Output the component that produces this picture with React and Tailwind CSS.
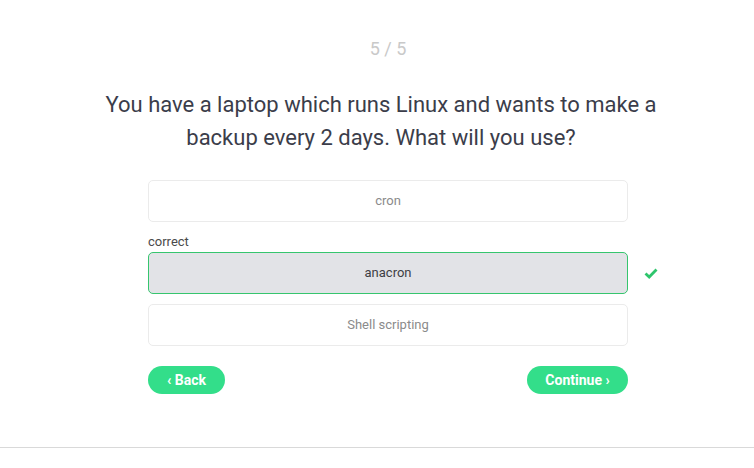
import React from "react";

const options = [
  { label: "cron", correct: false },
  { label: "anacron", correct: true },
  { label: "Shell scripting", correct: false },
];

function Check() {
  return (
    <svg width="14" height="11" viewBox="0 0 14 11" className="absolute left-[496px] top-[16px]">
      <path d="M1.5 5.5 L5.2 9 L12.5 1.5" fill="none" stroke="#2ec56c" strokeWidth="2.8" strokeLinejoin="miter" />
    </svg>
  );
}

export default function App() {
  return (
    <div className="min-h-[468px] bg-white font-['Roboto',sans-serif]">
      <div className="flex flex-col items-center pl-[22px] pt-[37px]">
        <div className="text-[18px] leading-[24px] text-[#c9c9c9]">5 / 5</div>
        <h1 className="mt-[27px] mr-[14px] w-[580px] text-center text-[22px] leading-[33px] text-[#3b3d4a] font-normal">
          You have a laptop which runs Linux and wants to make a backup every 2 days. What will you use?
        </h1>

        <div className="mt-[26px] w-[480px]">
          {options.map((opt, i) => (
            <div key={i} className={opt.correct ? "mt-[12px]" : i > 0 ? "mt-[10px]" : ""}>
              {opt.correct && (
                <div className="mb-[3px] text-[13px] leading-[15px] text-[#4a4a4a]">correct</div>
              )}
              <div className="relative">
                <div
                  className={
                    opt.correct
                      ? "flex h-[42px] items-center justify-center rounded-[5px] border border-[#36c56e] bg-[#e2e3e7] text-[13px] text-[#3e3e44]"
                      : "flex h-[42px] items-center justify-center rounded-[5px] border border-[#ebebeb] bg-white text-[13px] text-[#8b8b8b]"
                  }
                >
                  {opt.label}
                </div>
                {opt.correct && <Check />}
              </div>
            </div>
          ))}

          <div className="mt-[20px] flex justify-between">
            <button className="h-[28px] w-[77px] rounded-full bg-[#33de8a] text-[14px] font-bold text-white">
              ‹ Back
            </button>
            <button className="h-[28px] w-[101px] rounded-full bg-[#33de8a] text-[14px] font-bold text-white">
              Continue ›
            </button>
          </div>
        </div>
      </div>
      <div className="mt-[53px] h-px w-full bg-[#d9d9d9]" />
    </div>
  );
}
